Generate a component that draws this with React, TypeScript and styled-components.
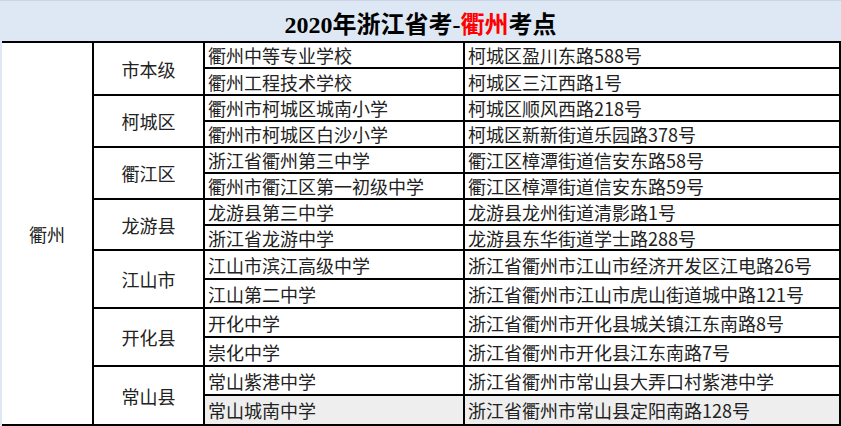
import React from "react";
import styled, { createGlobalStyle } from "styled-components";

const Global = createGlobalStyle`
  html, body { margin: 0; padding: 0; background: #ffffff; }
  body { width: 841px; height: 426px; overflow: hidden; }
`;

const Page = styled.div`
  width: 841px;
  height: 426px;
  display: flex;
  flex-direction: column;
  background: #dde8f4;
`;

const Header = styled.div`
  height: 40px;
  border-top: 1px solid #c9d5e6;
  display: flex;
  align-items: center;
  justify-content: center;
  padding-top: 2px;
  box-sizing: border-box;
  height: 41px;
  font-family: "Liberation Serif", "Noto Sans CJK SC", serif;
  font-weight: bold;
  font-size: 24px;
  color: #000;
  letter-spacing: 0px;
`;

const Red = styled.span`
  color: #ff0000;
`;

const Grid = styled.div`
  display: grid;
  grid-template-columns: 90px 109px 258px 374px;
  grid-template-rows: 24px 25px 24px 24px 24px 24px 24px 23px 27px 27px 27px 27px 27px 28px;
  gap: 2px;
  background: #000;
  padding: 2px 2px 2px 0;
  border-left: 2px solid #dde8f4;
  font-family: "Noto Sans CJK SC", "Noto Sans", sans-serif;
  font-size: 18px;
  color: #222;
`;

const Cell = styled.div<{ $span?: number; $center?: boolean; $shade?: boolean }>`
  background: ${(p) => (p.$shade ? "#eeeeee" : "#ffffff")};
  grid-row: ${(p) => (p.$span ? `span ${p.$span}` : "auto")};
  display: flex;
  align-items: center;
  justify-content: ${(p) => (p.$center ? "center" : "flex-start")};
  padding-left: ${(p) => (p.$center ? "0" : "3px")};
  white-space: nowrap;
  overflow: hidden;
  line-height: 1;
`;

const CityCell = styled(Cell)`
  grid-column: 1;
  grid-row: 1 / span 14;
`;

type School = { name: string; addr: string };
type District = { name: string; schools: School[] };

const data: District[] = [
  {
    name: "市本级",
    schools: [
      { name: "衢州中等专业学校", addr: "柯城区盈川东路588号" },
      { name: "衢州工程技术学校", addr: "柯城区三江西路1号" },
    ],
  },
  {
    name: "柯城区",
    schools: [
      { name: "衢州市柯城区城南小学", addr: "柯城区顺风西路218号" },
      { name: "衢州市柯城区白沙小学", addr: "柯城区新新街道乐园路378号" },
    ],
  },
  {
    name: "衢江区",
    schools: [
      { name: "浙江省衢州第三中学", addr: "衢江区樟潭街道信安东路58号" },
      { name: "衢州市衢江区第一初级中学", addr: "衢江区樟潭街道信安东路59号" },
    ],
  },
  {
    name: "龙游县",
    schools: [
      { name: "龙游县第三中学", addr: "龙游县龙州街道清影路1号" },
      { name: "浙江省龙游中学", addr: "龙游县东华街道学士路288号" },
    ],
  },
  {
    name: "江山市",
    schools: [
      { name: "江山市滨江高级中学", addr: "浙江省衢州市江山市经济开发区江电路26号" },
      { name: "江山第二中学", addr: "浙江省衢州市江山市虎山街道城中路121号" },
    ],
  },
  {
    name: "开化县",
    schools: [
      { name: "开化中学", addr: "浙江省衢州市开化县城关镇江东南路8号" },
      { name: "崇化中学", addr: "浙江省衢州市开化县江东南路7号" },
    ],
  },
  {
    name: "常山县",
    schools: [
      { name: "常山紫港中学", addr: "浙江省衢州市常山县大弄口村紫港中学" },
      { name: "常山城南中学", addr: "浙江省衢州市常山县定阳南路128号" },
    ],
  },
];

export default function App() {
  const total = data.reduce((n, d) => n + d.schools.length, 0);
  let idx = 0;
  return (
    <>
      <Global />
      <Page>
        <Header>
          <span>
            2020年浙江省考-<Red>衢州</Red>考点
          </span>
        </Header>
        <Grid>
          <CityCell $center>衢州</CityCell>
          {data.map((d) =>
            d.schools.map((s, i) => {
              idx += 1;
              const last = idx === total;
              return (
                <React.Fragment key={s.name}>
                  {i === 0 && (
                    <Cell $center $span={d.schools.length}>
                      {d.name}
                    </Cell>
                  )}
                  <Cell $shade={last}>{s.name}</Cell>
                  <Cell $shade={last}>{s.addr}</Cell>
                </React.Fragment>
              );
            })
          )}
        </Grid>
      </Page>
    </>
  );
}
